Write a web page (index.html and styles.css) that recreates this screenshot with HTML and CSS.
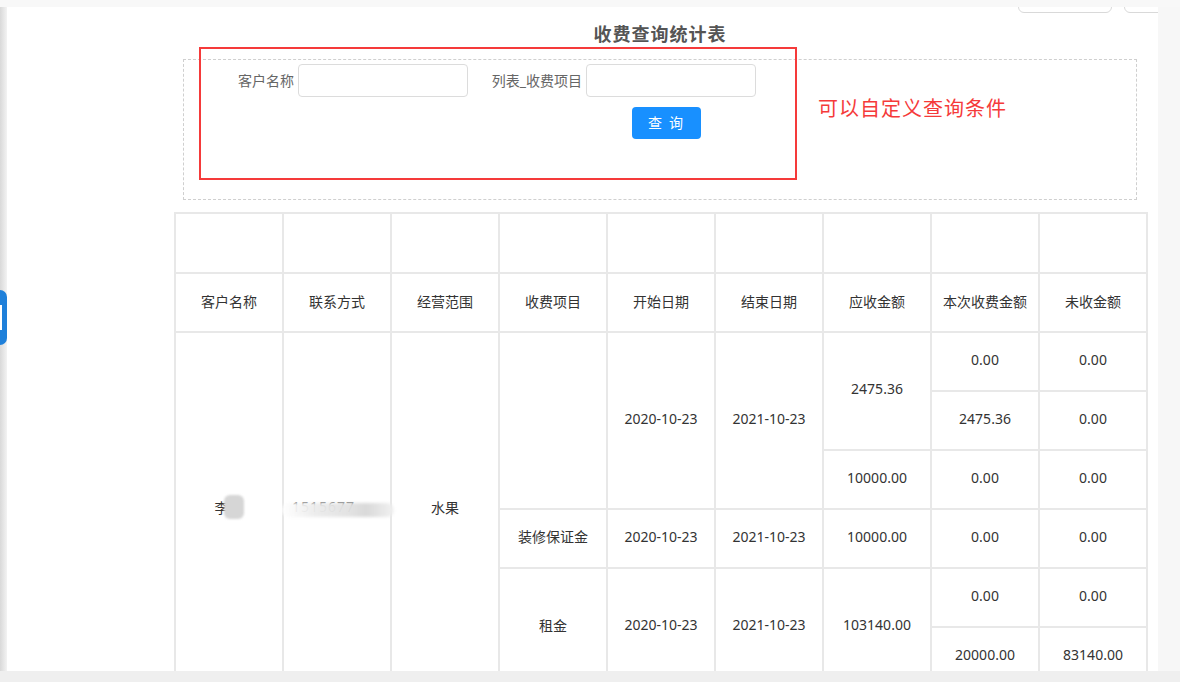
FILE: index.html
```html
<!DOCTYPE html>
<html lang="zh-CN">
<head>
<meta charset="utf-8">
<title>收费查询统计表</title>
<link rel="stylesheet" href="styles.css">
</head>
<body>
<div class="top-strip"></div>
<div class="middle">
  <div class="left-strip">
    <div class="side-tab"><div class="side-tab-inner"></div></div>
  </div>
  <div class="panel">
    <div class="toolbar">
      <button class="tool-btn" type="button"></button>
      <button class="tool-btn" type="button"></button>
    </div>
    <div class="content">
      <h1 class="title">收费查询统计表</h1>
      <div class="query-box">
        <div class="fields">
          <div class="field">
            <label class="field-label">客户名称</label>
            <input class="field-input" type="text">
          </div>
          <div class="field field-second">
            <label class="field-label">列表_收费项目</label>
            <input class="field-input" type="text">
          </div>
        </div>
        <button class="query-btn" type="button">查 询</button>
      </div>
      <table class="report">
        <colgroup>
          <col><col><col><col><col><col><col><col><col>
        </colgroup>
        <tr class="blank-row">
          <td></td><td></td><td></td><td></td><td></td><td></td><td></td><td></td><td></td>
        </tr>
        <tr class="head-row">
          <th>客户名称</th><th>联系方式</th><th>经营范围</th><th>收费项目</th><th>开始日期</th><th>结束日期</th><th>应收金额</th><th>本次收费金额</th><th>未收金额</th>
        </tr>
        <tr>
          <td rowspan="6"><span class="name">李</span><span class="blob"></span></td>
          <td rowspan="6"><span class="phone">1515677<span class="smudge"></span></span></td>
          <td rowspan="6">水果</td>
          <td rowspan="3"></td>
          <td rowspan="3">2020-10-23</td>
          <td rowspan="3">2021-10-23</td>
          <td rowspan="2">2475.36</td>
          <td>0.00</td>
          <td>0.00</td>
        </tr>
        <tr>
          <td>2475.36</td>
          <td>0.00</td>
        </tr>
        <tr>
          <td>10000.00</td>
          <td>0.00</td>
          <td>0.00</td>
        </tr>
        <tr>
          <td>装修保证金</td>
          <td>2020-10-23</td>
          <td>2021-10-23</td>
          <td>10000.00</td>
          <td>0.00</td>
          <td>0.00</td>
        </tr>
        <tr>
          <td rowspan="2">租金</td>
          <td rowspan="2">2020-10-23</td>
          <td rowspan="2">2021-10-23</td>
          <td rowspan="2">103140.00</td>
          <td>0.00</td>
          <td>0.00</td>
        </tr>
        <tr>
          <td>20000.00</td>
          <td>83140.00</td>
        </tr>
      </table>
    </div>
    <div class="annot-box"></div>
    <div class="annot-text">可以自定义查询条件</div>
  </div>
  <div class="right-strip"></div>
</div>
<div class="bottom-strip"></div>
</body>
</html>
```

FILE: styles.css
```css
* { box-sizing: border-box; }

html, body {
  margin: 0;
  padding: 0;
}

body {
  width: 1180px;
  height: 682px;
  overflow: hidden;
  background: #f7f7f7;
  font-family: "Noto Sans", "Noto Sans CJK SC", sans-serif;
  color: #333;
}

.top-strip {
  height: 7px;
  background: #f8f8f8;
}

.middle {
  display: flex;
  height: 664px;
}

.left-strip {
  width: 7px;
  flex: none;
  background: linear-gradient(to right, #d9d9d9, #f3f3f3);
  padding-top: 283px;
}

.side-tab {
  width: 7px;
  height: 55px;
  background: #1f80da;
  border-radius: 0 7px 7px 0;
  padding-top: 15px;
}

.side-tab-inner {
  width: 2px;
  height: 25px;
  background: #fff;
}

.panel {
  width: 1151px;
  flex: none;
  background: #fff;
  position: relative;
  overflow: hidden;
}

.right-strip {
  flex: 1;
  background: #f7f7f7;
}

.bottom-strip {
  height: 11px;
  background: #efefef;
}

.toolbar {
  display: flex;
  justify-content: flex-end;
  gap: 12px;
  margin-top: -26px;
  margin-right: -60px;
}

.tool-btn {
  width: 94px;
  height: 32px;
  border: 1px solid #d9d9d9;
  border-radius: 6px;
  background: #fff;
  padding: 0;
}

.content {
  padding: 0 11px 0 167px;
}

.title {
  margin: 9px 10px 0 9px;
  height: 24px;
  line-height: 24px;
  font-size: 18px;
  font-weight: bold;
  color: #555;
  text-align: center;
  letter-spacing: 1px;
}

.query-box {
  margin: 13px 10px 0 9px;
  height: 141px;
  border: 1px dashed #cfcfcf;
  padding: 4px 0 0 10px;
}

.fields {
  display: flex;
  align-items: center;
}

.field {
  display: flex;
  align-items: center;
}

.field-second {
  margin-left: 14px;
}

.field-label {
  width: 100px;
  margin-right: 4px;
  text-align: right;
  font-size: 14px;
  color: #666;
  white-space: nowrap;
  padding-bottom: 2px;
}

.field-input {
  width: 170px;
  height: 33px;
  border: 1px solid #dcdcdc;
  border-radius: 4px;
  background: #fff;
  padding: 0 8px;
  font-family: inherit;
}

.query-btn {
  display: block;
  margin: 10px 0 0 438px;
  width: 69px;
  height: 32px;
  border: none;
  border-radius: 4px;
  background: #1890ff;
  color: #fff;
  font-family: "Noto Sans CJK SC", sans-serif;
  font-size: 14px;
  letter-spacing: 2px;
  padding: 0 0 3px 0;
}

.report {
  margin-top: 12px;
  width: 974px;
  table-layout: fixed;
  border-collapse: collapse;
  border-top: 2px solid #efefef;
}

.report col {
  width: 108px;
}

.report td,
.report th {
  border: 2px solid #e8e8e8;
  height: 59px;
  padding: 0 0 5px 0;
  text-align: center;
  vertical-align: middle;
  font-size: 14px;
  font-weight: normal;
  color: #333;
  white-space: nowrap;
}

.report th {
  padding-bottom: 3px;
}

.report .blank-row td {
  height: 60px;
}

.name {
  display: inline-block;
  vertical-align: middle;
}

.blob {
  display: inline-block;
  vertical-align: middle;
  width: 20px;
  height: 24px;
  margin-left: -5px;
  background: #d6d6d6;
  border-radius: 6px;
  filter: blur(1px);
}

.phone {
  display: inline-block;
  position: relative;
  color: #777;
  margin-left: 6px;
  width: 96px;
  text-align: left;
  letter-spacing: 1px;
}

.smudge {
  position: absolute;
  left: -10px;
  right: -6px;
  top: 6px;
  height: 14px;
  background: linear-gradient(to right, rgba(255,255,255,0.9), rgba(235,235,235,0.95) 30%, rgba(225,225,225,0.95) 60%, rgba(215,215,215,0.95) 75%, rgba(240,240,240,0.9));
  border-radius: 7px;
  filter: blur(1.5px);
}

.annot-box {
  position: absolute;
  left: 192px;
  top: 40px;
  width: 598px;
  height: 133px;
  border: 2px solid #f53a3a;
}

.annot-text {
  position: absolute;
  left: 811px;
  top: 87px;
  font-family: "Noto Sans CJK SC", sans-serif;
  font-size: 20px;
  line-height: 28px;
  color: #f53a3a;
  letter-spacing: 1px;
}
```
